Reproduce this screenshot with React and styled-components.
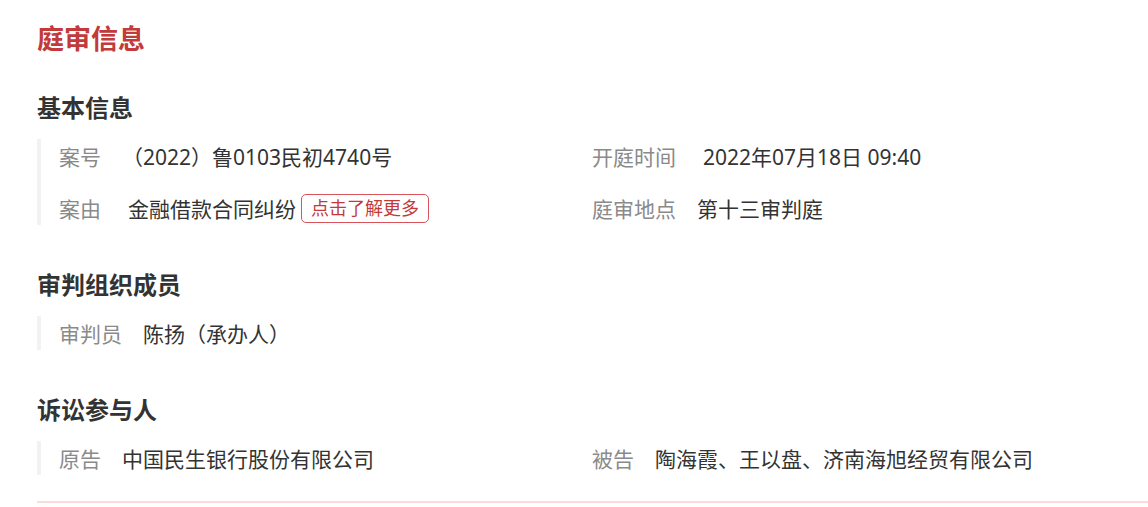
import React from 'react';
import styled, { createGlobalStyle } from 'styled-components';

// ================= style ======================= //
const GlobalStyle = createGlobalStyle`
    body {
        margin: 0;
        background: #fff;
        font-family: "Noto Sans", "Noto Sans CJK SC", sans-serif;
    }
`;

const Page = styled.div`
    padding: 20px 0 0 37px;
`;

const Title = styled.h1`
    margin: 0;
    font-size: 27px;
    line-height: 36px;
    font-weight: 700;
    color: #c23a3a;
    font-family: "Noto Sans CJK SC", sans-serif;
`;

const Section = styled.section`
    margin-top: ${(props) => props.first ? 34 : 42}px;
`;

const Heading = styled.h2`
    margin: 0 0 15px;
    font-size: 24px;
    line-height: 34px;
    font-weight: 700;
    color: #333;
    font-family: "Noto Sans CJK SC", sans-serif;
`;

const Fields = styled.div`
    display: grid;
    grid-template-columns: 533px 1fr;
    row-gap: 18px;
    padding-left: 18px;
    border-left: 4px solid #f2f2f2;
`;

const Field = styled.div`
    display: flex;
    align-items: center;
    height: 34px;
    font-size: 21px;
    white-space: nowrap;
`;

const Label = styled.span`
    color: #8a8a8a;
    margin-right: ${(props) => 21 + (props.indent || 0)}px;
`;

const Value = styled.span`
    color: #333;
`;

const Tag = styled.span`
    margin-left: 5px;
    padding: 1px 9px;
    font-size: 18px;
    line-height: 25px;
    color: #c23a3a;
    border: 1px solid #d9545a;
    border-radius: 5px;
    cursor: pointer;
`;

const Divider = styled.div`
    margin-top: 26px;
    height: 2px;
    background: #fbdcd8;
`;

// ================= data ======================= //
const sections = [
    {
        title: '基本信息',
        fields: [
            { label: '案号', value: '（2022）鲁0103民初4740号' },
            { label: '开庭时间', value: '2022年07月18日 09:40', indent: 6 },
            { label: '案由', value: '金融借款合同纠纷', indent: 6, tag: '点击了解更多' },
            { label: '庭审地点', value: '第十三审判庭' },
        ],
    },
    {
        title: '审判组织成员',
        fields: [
            { label: '审判员', value: '陈扬（承办人）' },
        ],
    },
    {
        title: '诉讼参与人',
        fields: [
            { label: '原告', value: '中国民生银行股份有限公司' },
            { label: '被告', value: '陶海霞、王以盘、济南海旭经贸有限公司' },
        ],
    },
];

// ================= component ======================= //
function App() {
    return (
        <Page>
            <GlobalStyle />
            <Title>庭审信息</Title>
            {sections.map((sec, i) => (
                <Section first={i === 0} key={sec.title}>
                    <Heading>{sec.title}</Heading>
                    <Fields>
                        {sec.fields.map((f) => (
                            <Field key={f.label}>
                                <Label indent={f.indent}>{f.label}</Label>
                                <Value>{f.value}</Value>
                                {f.tag ? <Tag>{f.tag}</Tag> : null}
                            </Field>
                        ))}
                    </Fields>
                </Section>
            ))}
            <Divider />
        </Page>
    );
}

export default App;
